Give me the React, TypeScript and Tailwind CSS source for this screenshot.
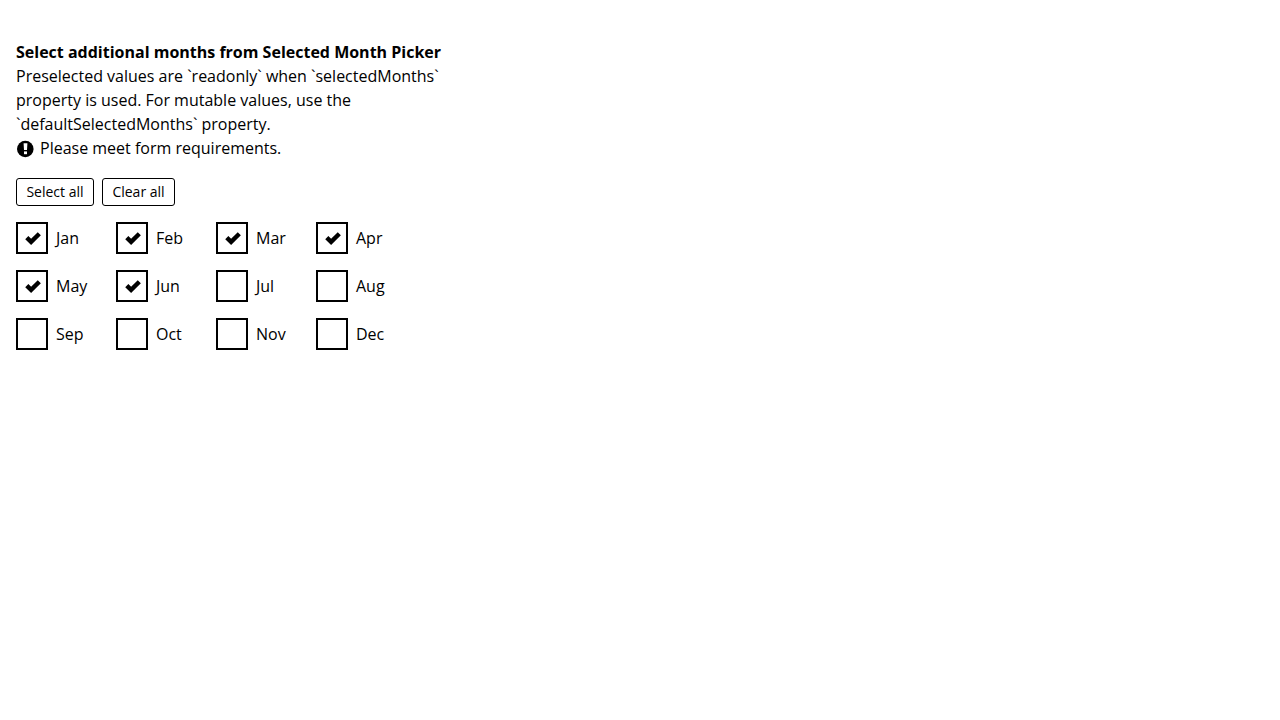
import { useState } from "react";

const MONTHS = ["Jan", "Feb", "Mar", "Apr", "May", "Jun", "Jul", "Aug", "Sep", "Oct", "Nov", "Dec"];
const PRESELECTED = ["Jan", "Feb", "Mar", "Apr", "May", "Jun"];

const buttonClass = "h-7 rounded-[3px] border border-black bg-white text-sm leading-4";

export default function App() {
  const [selected, setSelected] = useState<string[]>(PRESELECTED);

  const toggle = (month: string) =>
    setSelected((current) =>
      current.includes(month) ? current.filter((m) => m !== month) : [...current, month],
    );

  return (
    <main className="px-4 py-10 font-['Open_Sans','Noto_Sans',sans-serif] text-base text-black">
      <fieldset className="max-w-[460px]">
        <legend className="font-bold">Select additional months from Selected Month Picker</legend>
        <p>
          Preselected values are `readonly` when `selectedMonths` property is used. For mutable
          values, use the `defaultSelectedMonths` property.
        </p>
        <p className="flex items-center gap-1">
          <svg viewBox="0 0 20 20" className="size-5" aria-hidden="true">
            <circle cx="9.3" cy="11" r="8.3" />
            <path d="M7.6 5.2h3.8l-.4 6.8h-3z" fill="#fff" />
            <path d="M8 13.4h3v2.8h-3z" fill="#fff" />
          </svg>
          <span>Please meet form requirements.</span>
        </p>
        <div className="mt-[18px] flex gap-2">
          <button
            type="button"
            className={`${buttonClass} min-w-[78px]`}
            onClick={() => setSelected(MONTHS)}
          >
            Select all
          </button>
          <button
            type="button"
            className={`${buttonClass} min-w-[73px]`}
            onClick={() => setSelected(PRESELECTED)}
          >
            Clear all
          </button>
        </div>
        <div className="mt-4 grid grid-cols-[repeat(4,84px)] gap-4">
          {MONTHS.map((month) => (
            <label key={month} className="flex items-center gap-2">
              <span className="grid size-8 shrink-0">
                <input
                  type="checkbox"
                  checked={selected.includes(month)}
                  onChange={() => toggle(month)}
                  className="peer col-start-1 row-start-1 size-8 appearance-none border-2 border-black bg-white"
                />
                <svg
                  viewBox="0 0 32 32"
                  className="pointer-events-none invisible col-start-1 row-start-1 size-8 peer-checked:visible"
                  aria-hidden="true"
                >
                  <path
                    d="M10.8 15.6l4.3 4.3 8.2-8.2"
                    fill="none"
                    stroke="#000"
                    strokeWidth="4.4"
                  />
                </svg>
              </span>
              <span>{month}</span>
            </label>
          ))}
        </div>
      </fieldset>
    </main>
  );
}
